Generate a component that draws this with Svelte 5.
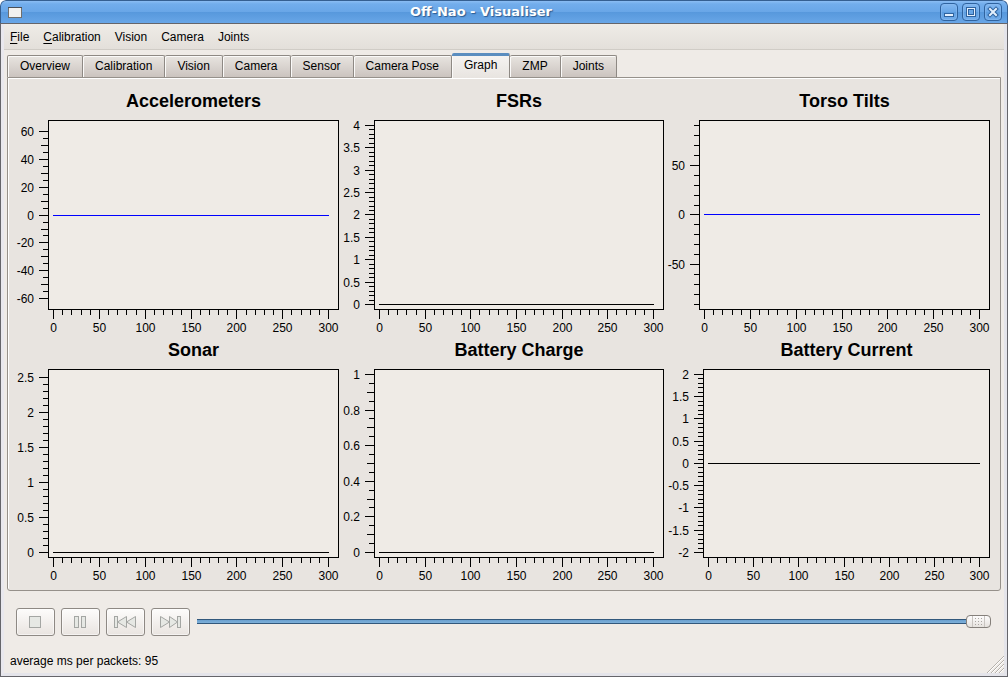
<script>
  const menus = [
    { key: 'F', rest: 'ile' },
    { key: 'C', rest: 'alibration' },
    { key: '', rest: 'Vision' },
    { key: '', rest: 'Camera' },
    { key: '', rest: 'Joints' }
  ];
  const tabs = ['Overview', 'Calibration', 'Vision', 'Camera', 'Sensor', 'Camera Pose', 'Graph', 'ZMP', 'Joints'];
  let active = $state('Graph');
  let position = $state(100);

  // Each step is [major, medium, minor]; a medium of 0 means the axis has none.
  const charts = [
    { title: 'Accelerometers', min: -64.3, max: 64.5, steps: [20, 10, 5], color: '#0000ff', gutter: 30 },
    { title: 'FSRs', min: 0, max: 4, steps: [0.5, 0, 0.1], color: '#000', gutter: 30 },
    { title: 'Torso Tilts', min: -90, max: 90, steps: [50, 0, 10], color: '#0000ff', gutter: 30 },
    { title: 'Sonar', min: 0, max: 2.54, steps: [0.5, 0, 0.1], color: '#000', gutter: 30 },
    { title: 'Battery Charge', min: 0, max: 1, steps: [0.2, 0.1, 0.05], color: '#000', gutter: 30 },
    { title: 'Battery Current', min: -2, max: 2, steps: [0.5, 0, 0.1], color: '#000', gutter: 34 }
  ];
  const sizes = $state(charts.map(() => ({ w: 321, h: 218 })));

  const multiple = (value, step) => step > 0 && Math.abs(value / step - Math.round(value / step)) < 0.001;

  function layout(chart, { w, h }) {
    const left = chart.gutter;
    const right = w - 1;
    const top = 6;
    const bottom = h - 23;
    const [major, medium, minor] = chart.steps;
    const yOf = (v) => Math.ceil(top + 4.5 + ((chart.max - v) / (chart.max - chart.min)) * (bottom - top - 10));
    const xOf = (v) => Math.round(left + 5 + (v / 300) * (right - left - 15));
    const yTicks = [];
    for (let i = Math.ceil(chart.min / minor - 0.001); i <= chart.max / minor + 0.001; i++) {
      const value = i * minor;
      const isMajor = multiple(value, major);
      yTicks.push({
        y: yOf(value),
        size: isMajor ? 9 : multiple(value, medium) ? 7 : 5,
        label: isMajor ? String(Number(value.toFixed(2))) : ''
      });
    }
    const xTicks = [];
    for (let value = 0; value <= 300; value += 10) {
      const isMajor = value % 50 === 0;
      xTicks.push({ x: xOf(value), size: isMajor ? 9 : 5, label: isMajor ? String(value) : '' });
    }
    return { left, right, top, bottom, yTicks, xTicks, zero: yOf(0), start: xOf(0), end: xOf(300) };
  }
</script>

<div class="window">
  <header class="titlebar">
    <svg class="app-icon" width="14" height="11" viewBox="0 0 14 11" aria-hidden="true">
      <rect x="0.5" y="0.5" width="13" height="10" fill="#f2f1ef" stroke="#6f6f6d" />
      <path d="M0 0.5H14" stroke="#4a4f57" />
    </svg>
    <h1>Off-Nao - Visualiser</h1>
    <div class="window-buttons">
      <button aria-label="Minimise">
        <svg width="16" height="16" viewBox="0 0 16 16"><rect x="3.5" y="9.5" width="9" height="3" fill="#e4f0fd" stroke="#2f639f" /></svg>
      </button>
      <button aria-label="Maximise">
        <svg width="16" height="16" viewBox="0 0 16 16">
          <rect x="3.5" y="3.5" width="9" height="9" fill="#e4f0fd" stroke="#2f639f" />
          <rect x="5.5" y="5.5" width="5" height="5" fill="#68a6e6" stroke="#2f639f" />
        </svg>
      </button>
      <button aria-label="Close">
        <svg width="16" height="16" viewBox="0 0 16 16">
          <path d="M5 5L11 11M11 5L5 11" stroke="#2f639f" stroke-width="4" stroke-linecap="square" />
          <path d="M5 5L11 11M11 5L5 11" stroke="#e4f0fd" stroke-width="2" stroke-linecap="square" />
        </svg>
      </button>
    </div>
  </header>

  <div class="body">
    <nav class="menubar">
      {#each menus as menu}
        <button>{#if menu.key}<span class="key">{menu.key}</span>{/if}{menu.rest}</button>
      {/each}
    </nav>

    <div class="tabs" role="tablist">
      {#each tabs as tab}
        <button role="tab" class:active={tab === active} aria-selected={tab === active} onclick={() => (active = tab)}>{tab}</button>
      {/each}
    </div>

    <main class="panel">
      {#each charts as chart, i}
        {@const g = layout(chart, sizes[i])}
        <section class="chart" style:--gutter="{chart.gutter}px">
          <h2>{chart.title}</h2>
          <div class="plot" bind:clientWidth={sizes[i].w} bind:clientHeight={sizes[i].h}>
            <svg width={sizes[i].w} height={sizes[i].h} role="img" aria-label={chart.title}>
              <rect x={g.left + 0.5} y={g.top + 0.5} width={g.right - g.left} height={g.bottom - g.top} fill="#efebe6" stroke="#000" />
              {#each g.yTicks as tick}
                <path d="M{g.left - tick.size} {tick.y + 0.5}H{g.left}" stroke="#000" />
                {#if tick.label}<text x={g.left - 14} y={tick.y + 5} text-anchor="end">{tick.label}</text>{/if}
              {/each}
              {#each g.xTicks as tick}
                <path d="M{tick.x + 0.5} {g.bottom + 1}v{tick.size}" stroke="#000" />
                {#if tick.label}<text x={tick.x + 0.5} y={g.bottom + 23} text-anchor="middle">{tick.label}</text>{/if}
              {/each}
              <path d="M{g.start} {g.zero + 0.5}H{g.end + 1}" stroke={chart.color} />
            </svg>
          </div>
        </section>
      {/each}
    </main>

    <div class="controls">
      <button aria-label="Stop">
        <svg width="23" height="14" viewBox="0 0 23 14"><rect x="5.5" y="1.5" width="11" height="11" /></svg>
      </button>
      <button aria-label="Pause">
        <svg width="23" height="14" viewBox="0 0 23 14"><rect x="5.5" y="1.5" width="4" height="11" /><rect x="12.5" y="1.5" width="4" height="11" /></svg>
      </button>
      <button aria-label="Previous">
        <svg width="23" height="14" viewBox="0 0 23 14"><path d="M12.5 1.5V12.5L3.5 7ZM21.5 1.5V12.5L12.5 7Z" /><rect x="0.5" y="1.5" width="3" height="11" /></svg>
      </button>
      <button aria-label="Next">
        <svg width="23" height="14" viewBox="0 0 23 14"><path d="M1.5 1.5V12.5L10.5 7ZM10.5 1.5V12.5L18.5 7Z" /><rect x="18.5" y="1.5" width="3" height="11" /></svg>
      </button>
      <input type="range" min="0" max="100" aria-label="Position in log" bind:value={position} />
    </div>

    <footer class="status">
      <span>average ms per packets: 95</span>
      <svg width="17" height="17" viewBox="0 0 17 17" aria-hidden="true">
        <path d="M1 17L17 1M5 17L17 5M9 17L17 9M13 17L17 13" stroke="#fff" />
        <path d="M0 17L17 0M4 17L17 4M8 17L17 8M12 17L17 12" stroke="#b5b0aa" />
      </svg>
    </footer>
  </div>
</div>

<style>
  :global(body) { margin: 0; background: #fff; }
  .window {
    box-sizing: border-box;
    min-height: 100vh;
    display: flex;
    flex-direction: column;
    border-radius: 6px 6px 0 0;
    overflow: hidden;
    font: 12px/16px "Liberation Sans", Arial, sans-serif;
    color: #000;
    background: #e4e4ea;
  }
  button { font: inherit; color: inherit; margin: 0; padding: 0; }
  .titlebar {
    box-sizing: border-box;
    height: 24px;
    flex: none;
    display: grid;
    grid-template-columns: auto 1fr auto;
    align-items: center;
    padding: 0 5px 0 7px;
    border: 1px solid #355f91;
    border-bottom-color: #3b6fac;
    border-radius: 6px 6px 0 0;
    background: linear-gradient(#8bbdf3 0, #72adec 3px, #69a6e7 11px, #5798dc 11px, #68a6e7 22px);
  }
  h1 {
    margin: 0;
    text-align: center;
    font: bold 13px/20px "DejaVu Sans", sans-serif;
    color: #fff;
    text-shadow: 1px 1px 1px #2c5a8f;
  }
  .window-buttons { display: flex; gap: 4px; }
  .window-buttons button {
    width: 18px;
    height: 18px;
    border: 1px solid #2f639f;
    border-radius: 4px;
    background: linear-gradient(#83b8f1, #68a6e7 50%, #5c9de0 50%, #74aeec);
    box-shadow: inset 0 0 0 1px #8abcf088;
  }
  .window-buttons svg { display: block; }
  .body {
    flex: 1;
    display: flex;
    flex-direction: column;
    margin: 0 1px 1px;
    border: 3px solid #e4e4ea;
    border-top: 0;
    border-left-color: #e9e8ee;
    outline: 1px solid #65656a;
    background: #efebe7;
  }
  .menubar {
    display: flex;
    gap: 14px;
    height: 25px;
    padding-left: 6px;
    border-bottom: 1px solid #d0ccc6;
    background: linear-gradient(#efece7, #e3dfda);
  }
  .menubar button { border: 0; background: none; }
  .key { text-decoration: underline; text-underline-offset: 2px; }
  .tabs {
    display: flex;
    align-items: flex-end;
    height: 27px;
    margin-left: 3px;
  }
  .tabs button {
    height: 22px;
    padding: 0 12px 2px;
    border: 1px solid #8e8984;
    border-left-width: 0;
    border-bottom: 0;
    border-radius: 2px 2px 0 0;
    background: linear-gradient(#e8e4e0, #cbc4bf);
    box-shadow: inset 1px 1px #fbfaf9;
  }
  .tabs button:first-child { border-left-width: 1px; }
  .tabs button.active {
    position: relative;
    height: 25px;
    margin-bottom: -1px;
    padding-bottom: 4px;
    border-top: 3px solid #5a8dbf;
    background: linear-gradient(#f5f3f1, #e8e4e0);
    box-shadow: inset 1px 0 #fbfaf9;
  }
  .panel {
    flex: 1;
    display: grid;
    grid-template-columns: minmax(0, 321fr) minmax(0, 320fr) minmax(0, 321fr);
    grid-template-rows: minmax(0, 244fr) minmax(0, 243fr);
    gap: 5px;
    margin: 0 3px;
    padding: 10px;
    border: 1px solid #96918b;
    border-radius: 0 0 3px 3px;
    background: #e8e4e0;
    box-shadow: inset 1px 1px #fff;
  }
  .chart { display: flex; flex-direction: column; min-height: 200px; }
  h2 {
    margin: 0;
    padding-left: var(--gutter);
    font: bold 18px/26px "Liberation Sans", Arial, sans-serif;
    text-align: center;
  }
  .plot { flex: 1; contain: size; }
  .plot svg { display: block; overflow: visible; }
  .controls {
    display: flex;
    align-items: center;
    gap: 6px;
    margin: 17px 13px 14px 12px;
  }
  .controls button {
    width: 39px;
    height: 28px;
    flex: none;
    border: 1px solid #8e8984;
    border-radius: 3px;
    background: linear-gradient(#fdfcfb, #e9e4e0);
    box-shadow: inset 0 0 0 1px #fff8;
  }
  .controls svg { display: block; margin: 0 auto; fill: #e6e8e4; stroke: #a4a6a3; }
  input {
    appearance: none;
    flex: 1;
    min-width: 0;
    height: 13px;
    margin: 0 0 1px 1px;
    background: linear-gradient(#32587c, #32587c 1px, #6aa0cf 1px, #7eb0da 4px, #32587c 4px) 0 4px / 100% 5px no-repeat;
  }
  input::-webkit-slider-thumb {
    appearance: none;
    box-sizing: border-box;
    width: 25px;
    height: 13px;
    border: 1px solid #85807b;
    border-radius: 4px;
    background:
      linear-gradient(#c9c5c1, #c9c5c1) 5px 0 / 1px 100% no-repeat,
      linear-gradient(#c9c5c1, #c9c5c1) 17px 0 / 1px 100% no-repeat,
      url("data:image/svg+xml,%3Csvg xmlns='http://www.w3.org/2000/svg' width='7' height='7'%3E%3Cpath d='M0 .5H7M0 3.5H7M0 6.5H7' stroke='%23aaa6a2' stroke-dasharray='1 2'/%3E%3C/svg%3E") 8px 2px no-repeat,
      linear-gradient(#fdfcfc, #e6e2de);
  }
  .status {
    display: flex;
    justify-content: space-between;
    align-items: center;
    height: 23px;
    padding-left: 6px;
  }
  .status span { padding-bottom: 2px; }
  .status svg { align-self: flex-end; }
</style>
